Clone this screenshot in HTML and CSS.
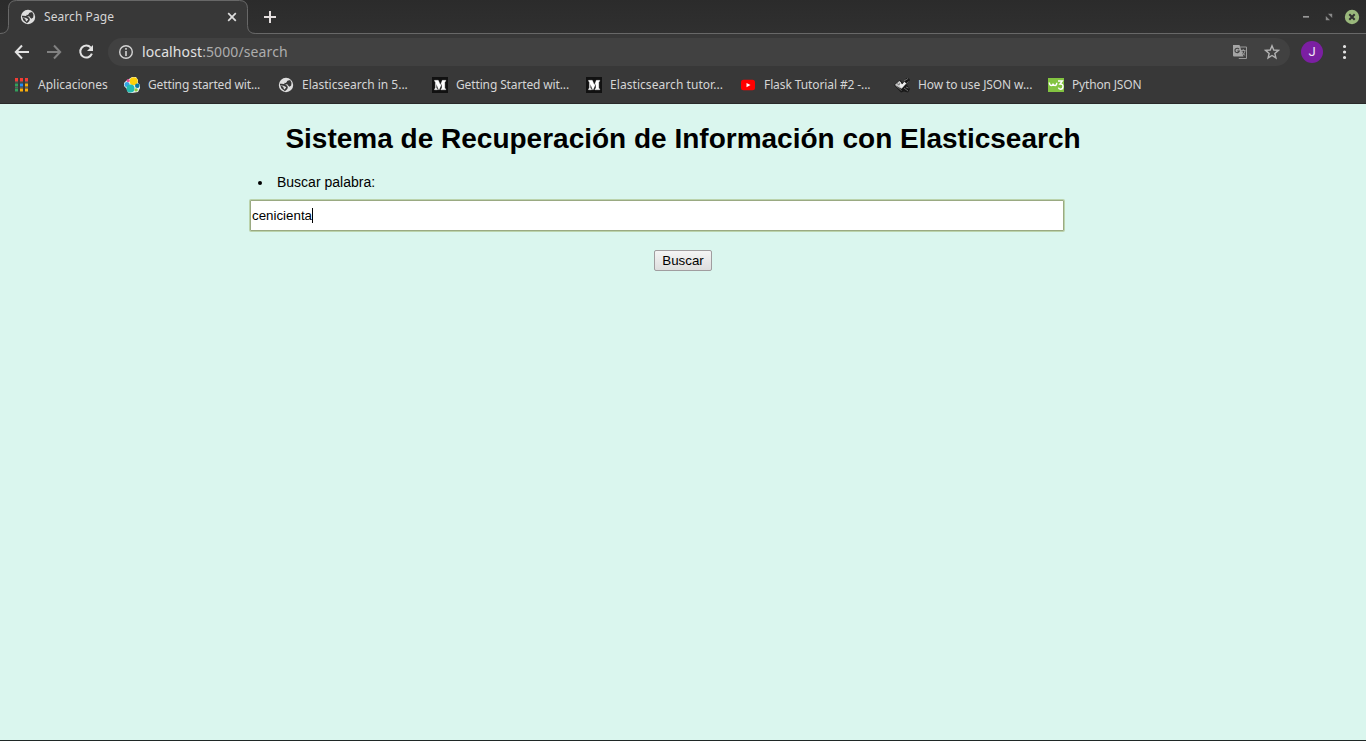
FILE: index.html
```html
<!DOCTYPE html>
<html lang="es">
<head>
<meta charset="utf-8">
<title>Search Page</title>
<link rel="stylesheet" href="styles.css">
</head>
<body>
<svg class="defs" width="0" height="0">
  <symbol id="globe" viewBox="0 0 16 16"><circle cx="8" cy="8" r="7.200" fill="#dedede"/><path d="M12.300 4.200Q9.800 3.800 9.300 5.500T6.400 6.600M2 7.600Q5.500 7.300 7.600 8.700T8.600 11.400 6.300 13.600" fill="none" stroke="#383838" stroke-width="1.700"/><path d="m9.500 4 3-.2 1 2-.3 2.700-1.700 1.200-1.700-1.400-1-2zM2.400 8.500l2.800 1.200.6 2 1.100 1.700-1.600-.3-2-1.900z" fill="#383838"/></symbol>
  <symbol id="medium" viewBox="0 0 16 16"><path d="M0 0h16v16H0z" fill="#111"/><path d="M2.500 3.300h3.800L8.400 8l1.900-4.700h3.500v.9l-1 .7v6.300l1 .7v.9H8.900v-.9l1-.7V6.200l-2.700 6.600h-.5L4.300 6.900v4.200l1.200.8v.9h-3v-.9l.9-.8V4.900l-.9-.7z" fill="#fff" stroke="#fff" stroke-width=".3"/></symbol>
</svg>
<header class="browser">
  <div class="tabstrip">
    <div class="tab">
      <svg class="tab-shape" width="264" height="34" viewBox="0 0 264 34"><path d="M0 33.500Q8.500 33.500 8.500 25.500V8.500Q8.500.5 16.500.5H239.500Q247.500.5 247.500 8.500V25.500Q247.500 33.500 255.500 33.500H264V34H0z" fill="#383838"/><path d="M0 33.500Q8.500 33.500 8.500 25.500V8.500Q8.500.5 16.500.5H239.500Q247.500.5 247.500 8.500V25.500Q247.500 33.500 255.500 33.500H264" fill="none" stroke="#686868"/></svg>
      <svg class="icon16"><use href="#globe"/></svg>
      <span class="tab-title">Search Page</span>
      <svg class="tab-close" width="10" height="10" viewBox="0 0 10 10"><path d="m1.200 1.200 7.600 7.600m0-7.600L1.200 8.800" stroke="#dedede" stroke-width="1.700"/></svg>
    </div>
    <svg class="newtab" width="14" height="14" viewBox="0 0 14 14"><path d="M7 1v12M1 7h12" stroke="#e4dfdf" stroke-width="2"/></svg>
    <div class="window-controls">
      <svg width="8" height="14" viewBox="0 0 8 14"><path d="M1 6.800h6" stroke="#989898" stroke-width="1.700"/></svg>
      <svg width="8" height="8" viewBox="0 0 8 8"><path d="M3 .8h4.200V5zM.8 3v4.200H5z" fill="#898989"/></svg>
      <svg width="16" height="16" viewBox="0 0 16 16"><circle cx="8" cy="8" r="7.200" fill="#9ab87c"/><path d="m5.300 5.300 5.400 5.400m0-5.400-5.400 5.400" stroke="#303030" stroke-width="2"/></svg>
    </div>
  </div>
  <div class="toolbar">
    <svg class="nav" viewBox="0 0 16 16"><path d="M15 8H2M8 1.500 1.800 8 8 14.500" fill="none" stroke="#e2e2e2" stroke-width="2"/></svg>
    <svg class="nav" viewBox="0 0 16 16"><path d="M1 8h13M8 1.500 14.200 8 8 14.500" fill="none" stroke="#818181" stroke-width="2"/></svg>
    <svg class="nav" viewBox="0 0 16 16"><path d="M12.800 3.600A6 6 0 1 0 13.900 9.700" fill="none" stroke="#e2e2e2" stroke-width="2"/><path d="M15 1v6H9z" fill="#e2e2e2"/></svg>
    <div class="omnibox">
      <svg class="icon16" viewBox="0 0 16 16"><circle cx="8" cy="8" r="6.300" fill="none" stroke="#d4d4d4" stroke-width="1.400"/><path d="M8 7v5M8 4v1.700" stroke="#d4d4d4" stroke-width="1.600"/></svg>
      <div class="url">localhost<span>:5000/search</span></div>
      <svg class="icon16" viewBox="0 0 16 16"><path d="M8 3h6.500v11.500H6.800" fill="none" stroke="#999"/><path d="M1 1h6.500l4 11.500H2q-1 0-1-1z" fill="#a5a5a5"/><path d="M7 5.200A2.200 2.200 0 1 0 7.300 7H5.200" fill="none" stroke="#414141" stroke-width="1.100"/><path d="M9 6.500h4.500M11.200 5v1.500M9.800 7q1 3 3.400 4.500M13 7q-.7 3-2.700 4.500" fill="none" stroke="#999"/></svg>
      <svg class="icon16 star" viewBox="0 0 16 16"><path d="m8 1.800 1.750 4.250 4.600.35-3.500 3 1.080 4.500L8 11.500l-3.930 2.400 1.080-4.500-3.500-3 4.600-.35z" fill="none" stroke="#b2b2b2" stroke-width="1.400"/></svg>
    </div>
    <div class="avatar">J</div>
    <svg class="menu" width="6" height="16" viewBox="0 0 6 16"><path d="M2.500 2.500h.1M2.500 8h.1M2.500 13.500h.1" stroke="#e2e2e2" stroke-width="3.100" stroke-linecap="round"/></svg>
  </div>
  <nav class="bookmarks">
    <a class="bookmark apps"><svg class="icon16" viewBox="0 0 16 16"><path d="M1 1h3v3.500H1zM6 1h3v3.500H6zM11 1h3v3.500h-3z" fill="#f33d35"/><path d="M1 6.500h3v3H1zM1 11.500h3v3H1z" fill="#32a05c"/><path d="M6 6.500h3v3H6z" fill="#258bf5"/><path d="M11 6.500h3v3h-3zM6 11.500h3v3H6zM11 11.500h3v3h-3z" fill="#fbae0b"/><path d="M1 5h3m2 0h3m2 0h3M1 10.500h3m2 0h3m2 0h3" stroke="#777" stroke-width=".6"/></svg><span>Aplicaciones</span></a>
    <a class="bookmark tight"><svg class="icon16" viewBox="0 0 16 16"><path d="M5 2 8 0h4l2 3v3l2 2v3l-2 4-3 .5L8 16l-4-.5-1.500-4L0 9V6l2-2z" fill="#e9f3f4"/><circle cx="9.700" cy="4.300" r="4" fill="#fed10a"/><circle cx="3" cy="7.400" r="2.500" fill="#36a4e3"/><circle cx="6.500" cy="11.500" r="4" fill="#24bbb1"/><circle cx="13.300" cy="8.800" r="2.300" fill="#0779a1"/><circle cx="4.200" cy="3.600" r="1.600" fill="#ef5098"/><circle cx="12.100" cy="12.900" r="1.700" fill="#93c83e"/></svg><span>Getting started wit...</span></a>
    <a class="bookmark"><svg class="icon16"><use href="#globe"/></svg><span>Elasticsearch in 5...</span></a>
    <a class="bookmark tight"><svg class="icon16"><use href="#medium"/></svg><span>Getting Started wit...</span></a>
    <a class="bookmark loose"><svg class="icon16"><use href="#medium"/></svg><span>Elasticsearch tutor...</span></a>
    <a class="bookmark snug"><svg class="icon16" viewBox="0 0 16 16"><rect x="1" y="2.700" width="14" height="10.600" rx="2.500" fill="#f00"/><path d="m6.500 6 4 2.100-4 2.100z" fill="#fff"/></svg><span>Flask Tutorial #2 -...</span></a>
    <a class="bookmark snug"><svg class="icon16" viewBox="0 0 16 16"><path d="m0 8 6-5 4 4 2-6 3 .5 1 1.500-3 5 3 4-2 3.500-4-1-3 1z" fill="#191919"/><path d="m.8 8 4.700-4.200L8 7.500 10.500 5l1.700 1.500-4.700 5.300L5 10.400z" fill="#c9c9c9"/><path d="M6 4.500 8 7.700l2.500-2.600 1.600 1.400-4.300 4.400L5.700 9z" fill="#eee"/><path d="m3 6.500 2 1.500 1-2M2 9l5.500 4.500M10 4l4-2.500M12 7.500l2.500-3M10 11l4 3M12 10l2.500 1" fill="none" stroke="#747474" stroke-width=".9"/></svg><span>How to use JSON w...</span></a>
    <a class="bookmark python"><svg class="icon16" viewBox="0 0 16 16"><path d="M0 1h16v14H0z" fill="#83c441"/><path d="M1.300 5.500Q1.500 8.500 3.500 8.500 5 8.500 5 6.500 5.200 8.500 7 8.500q1.700 0 1.800-2.700M10 4h4.300L12 7q3-.2 3 2.500 0 2.800-2.500 2.800-1.700 0-2.100-1.600" fill="none" stroke="#fff" stroke-width="1.400"/></svg><span>Python JSON</span></a>
  </nav>
</header>
<main class="page">
  <h1>Sistema de Recuperación de Información con Elasticsearch</h1>
  <form class="search">
    <div class="label"><i class="bullet"></i><label>Buscar palabra:</label></div>
    <div class="field">cenicienta<i class="caret"></i></div>
    <button type="button">Buscar</button>
  </form>
</main>
</body>
</html>
```
FILE: styles.css
```css
* { box-sizing: border-box; }
body {
  margin: 0;
  height: 741px;
  display: flex;
  flex-direction: column;
  overflow: hidden;
  background: #daf6ee;
  font-family: "Liberation Sans", Arial, sans-serif;
}
.defs { position: absolute; }
svg { display: block; flex: none; }
.icon16 { width: 16px; height: 16px; }

.browser {
  height: 104px;
  background: #383838;
  border-bottom: 1px solid #292929;
  color: #d5d5d5;
  font-family: "Noto Sans", sans-serif;
}
.tabstrip {
  height: 34px;
  display: flex;
  align-items: center;
  background: linear-gradient(#2b2b2b, #303030);
  border-bottom: 1px solid #686868;
}
.tab {
  position: relative;
  width: 248px;
  height: 34px;
  padding: 0 11px 0 20px;
  display: flex;
  align-items: center;
  margin-bottom: -1px;
}
.tab-shape { position: absolute; left: 0; top: 0; }
.tab > :not(.tab-shape) { position: relative; }
.tab-title { font-size: 12px; line-height: 16px; margin-left: 8px; letter-spacing: .07px; }
.tab-close { margin-left: auto; }
.newtab { margin-left: 15px; }
.window-controls {
  margin-left: auto;
  padding-right: 6.500px;
  display: flex;
  align-items: center;
  gap: 15px;
}
.window-controls svg:last-child { margin-left: -4px; }

.toolbar {
  height: 36px;
  padding-left: 14px;
  display: flex;
  align-items: center;
}
.nav { width: 16px; height: 16px; margin-right: 16px; }
.omnibox {
  width: 1182px;
  height: 28px;
  margin-left: -2px;
  padding: 0 10px;
  display: flex;
  align-items: center;
  border-radius: 14px;
  background: #414141;
}
.url {
  flex: 1;
  margin-left: 8px;
  padding-bottom: 2px;
  font-size: 14px;
  letter-spacing: .11px;
  color: #e2e2e2;
}
.url span { color: #adadad; }
.star { margin-left: 16px; }
.avatar {
  width: 22px;
  height: 22px;
  margin-left: 11px;
  border-radius: 50%;
  background: #7b1fa2;
  color: #f2e7f7;
  font: 13px/22px Roboto, sans-serif;
  text-align: center;
}
.menu { margin-left: 19px; }

.bookmarks {
  height: 30px;
  padding-left: 14px;
  display: flex;
  align-items: center;
}
.bookmark {
  width: 154px;
  display: flex;
  align-items: center;
  gap: 8px;
  font-size: 12px;
  line-height: 16px;
  white-space: nowrap;
}
.apps { width: 110px; }
.tight { letter-spacing: -.13px; }
.snug { letter-spacing: -.1px; }
.python { letter-spacing: -.17px; }
.loose { letter-spacing: .06px; }

.page {
  flex: 1;
  border-bottom: 1px solid #1f2826;
  color: #000;
  font-size: 14px;
}
h1 {
  margin: 19px 0 0;
  font-size: 28px;
  line-height: 32px;
  text-align: center;
}
.search { width: 866px; margin: 19px auto 0; }
.label {
  height: 16px;
  padding-left: 8px;
  display: flex;
  align-items: center;
  line-height: 16px;
}
.bullet {
  width: 4px;
  height: 4px;
  margin-top: 2px;
  margin-right: 15px;
  border-radius: 50%;
  background: #000;
}
.field {
  width: 814px;
  height: 31px;
  margin-top: 10px;
  padding-left: 1px;
  display: flex;
  align-items: center;
  background: #fff;
  border: 1px solid #9aaa82;
  box-shadow: 0 0 0 1px #bbd3ac;
  border-radius: 1px;
  font-size: 13.333px;
}
.caret { width: 1px; height: 15px; background: #000; }
button {
  display: block;
  width: 58px;
  height: 21px;
  margin: 19px auto 0;
  padding: 0;
  border: 1px solid #a09d9f;
  border-radius: 2px;
  background: linear-gradient(#f4f4f4, #dedede);
  color: #000;
  font: 13.333px "Liberation Sans", Arial, sans-serif;
}
```
